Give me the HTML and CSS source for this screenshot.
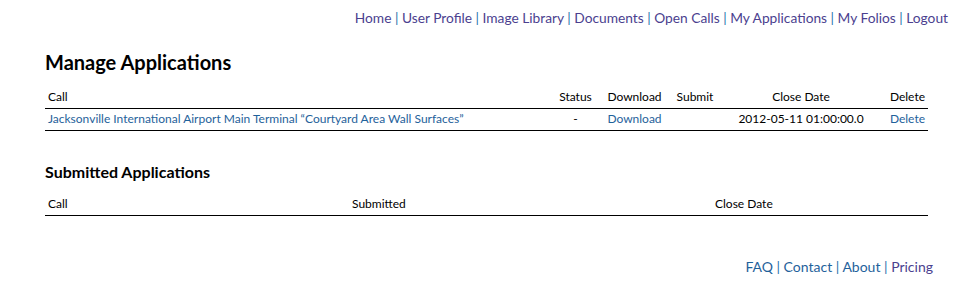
FILE: index.html
```html
<!DOCTYPE html>
<html lang="en">

<head>
    <meta charset="UTF-8">
    <meta name="viewport" content="width=device-width, initial-scale=1.0">
    <title>Manage Applications</title>
    <link rel="stylesheet" href="styles.css">
</head>

<body>

    <div class="top-nav">
        <a href="#">Home</a> | <a href="#">User Profile</a> | <a href="#">Image Library</a> |
        <a href="#">Documents</a> | <a href="#">Open Calls</a> | <a href="#">My Applications</a> |
        <a href="#">My Folios</a> | <a href="#">Logout</a>
    </div>

    <div class="content">
        <h1>Manage Applications</h1>
        <table class="apps">
            <thead>
                <tr>
                    <th class="col-call">Call</th>
                    <th class="col-status">Status</th>
                    <th class="col-download">Download</th>
                    <th class="col-submit">Submit</th>
                    <th class="col-close">Close Date</th>
                    <th class="col-delete">Delete</th>
                </tr>
            </thead>
            <tbody>
                <tr>
                    <td><a class="link" href="#">Jacksonville International Airport Main Terminal “Courtyard Area Wall Surfaces”</a></td>
                    <td class="col-status">-</td>
                    <td class="col-download"><a class="link" href="#">Download</a></td>
                    <td></td>
                    <td class="col-close">2012-05-11 01:00:00.0</td>
                    <td class="col-delete"><a class="link" href="#">Delete</a></td>
                </tr>
            </tbody>
        </table>

        <h2>Submitted Applications</h2>
        <table class="submitted">
            <thead>
                <tr>
                    <th class="s-call">Call</th>
                    <th class="s-submitted">Submitted</th>
                    <th class="s-close">Close Date</th>
                </tr>
            </thead>
        </table>
    </div>

    <div class="footer">
        <a class="link" href="#">FAQ</a> | <a class="link" href="#">Contact</a> | <a class="link" href="#">About</a> |
        <a href="#">Pricing</a>
    </div>

</body>

</html>
```

FILE: styles.css
```css
* {
    margin: 0px;
    box-sizing: border-box;
}

body {
    font-family: Lato, "Open Sans", sans-serif;
    color: #000;
    background-color: #fff;
}

a {
    color: #4b3f8f;
    text-decoration: none;
}

a.link {
    color: #1f629b;
}

.top-nav {
    padding: 9px 28px 0 0;
    text-align: right;
    font-size: 13.75px;
    line-height: 17px;
    color: #2a74ab;
}

.content {
    padding: 0 48px 0 45px;
}

h1 {
    margin-top: 24px;
    font-size: 20px;
    line-height: 24px;
    font-weight: bold;
}

h2 {
    margin-top: 31px;
    font-size: 16px;
    line-height: 20px;
    font-weight: bold;
}

table {
    width: 100%;
    border-collapse: collapse;
    font-size: 12px;
    line-height: 14px;
}

th {
    font-weight: normal;
    text-align: left;
    padding: 4px 3px;
    border-bottom: 1px solid #000;
}

td {
    padding: 3px 3px 4px;
    border-bottom: 1px solid #000;
}

.apps {
    margin-top: 12px;
}

.col-status {
    width: 43px;
    text-align: center;
}

.col-download {
    width: 75px;
    text-align: center;
}

.col-submit {
    width: 46px;
    text-align: center;
}

.col-close {
    width: 166px;
    text-align: center;
}

.col-delete {
    width: 44px;
    text-align: right;
}

.submitted {
    margin-top: 11px;
}

.s-call {
    width: 304px;
}

.s-submitted {
    width: 363px;
}

.footer {
    margin-top: 42px;
    padding-right: 43px;
    text-align: right;
    font-size: 14px;
    line-height: 18px;
    color: #2a74ab;
}
```
